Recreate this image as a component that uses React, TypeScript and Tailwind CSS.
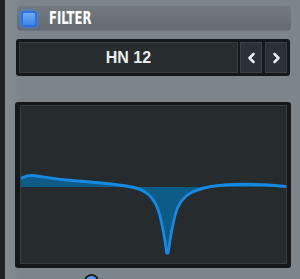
import React from 'react';

const curve =
  'M21,178.5 C25,176 29,175 33,175.5 C42,176.5 52,179 72,180.5 C100,182.5 118,184.5 132,187 C146,189.5 155,197 160,214 C164,229 166,244 167.3,253 L168.7,253 C170,244 172,229 176,214 C181,197 191,190 212,186.5 C232,183.5 262,184 287,186.5';

const fill = `${curve} L287,187 L21,187 Z`;

function Chevron({ dir }: { dir: 'left' | 'right' }) {
  return (
    <svg width="9" height="12" viewBox="0 0 9 12">
      <polyline
        points={dir === 'left' ? '6.5,2 2.5,6 6.5,10' : '2.5,2 6.5,6 2.5,10'}
        fill="none"
        stroke="#e6eaec"
        strokeWidth="2.6"
        strokeLinecap="round"
        strokeLinejoin="round"
      />
    </svg>
  );
}

export default function App() {
  return (
    <div className="w-[300px] h-[279px] overflow-hidden flex bg-[#7c858b] font-['Liberation_Sans',sans-serif]">
      <div className="w-[5px] shrink-0 bg-[#1e2225]" />
      <div className="flex-1 flex flex-col pl-[10px] pr-[9px] pt-[6px] bg-gradient-to-r from-[#858d93] to-[#7c858b] to-[6%]">
        {/* header */}
        <div className="shrink-0 ml-[2px] h-[25px] rounded-[4px] bg-gradient-to-b from-[#737a80] to-[#62696f] flex items-center pl-[4px] gap-[12px] shadow-[inset_0_-1px_0_rgba(255,255,255,0.08)]">
          <div className="w-[16px] h-[16px] rounded-[3px] border-2 border-[#2f6fe0] bg-gradient-to-b from-[#6eaef5] to-[#3c86e6] shadow-[0_0_3px_1px_rgba(60,140,255,0.7)]" />
          <span className="inline-block origin-left scale-x-[0.76] text-[17px] font-bold text-white font-['DejaVu_Sans_Condensed','DejaVu_Sans',sans-serif] leading-none">
            FILTER
          </span>
        </div>

        {/* preset selector */}
        <div className="shrink-0 ml-[1px] mr-[1px] mt-[8px] h-[37px] rounded-[3px] bg-[#15181a] p-[3px] flex gap-[2px]">
          <div className="flex-1 bg-[#272c2f] border border-[#363c40] flex items-center justify-center">
            <span className="text-[16px] font-bold text-[#e9edef] leading-none">HN 12</span>
          </div>
          <button className="w-[22px] bg-[#2b3134] border border-[#3a4145] flex items-center justify-center">
            <Chevron dir="left" />
          </button>
          <button className="ml-[1px] w-[22px] bg-[#2b3134] border border-[#3a4145] flex items-center justify-center">
            <Chevron dir="right" />
          </button>
        </div>

        {/* filter response graph */}
        <div className="shrink-0 mt-[26px] h-[166px] rounded-[3px] bg-[#15181a] pt-[3px] pl-[5px] pr-[4px] pb-[4px] flex">
          <div className="flex-1 bg-[#262b2e] border border-[#383e42] overflow-hidden">
            <svg width="100%" height="100%" viewBox="21 106 266 157" preserveAspectRatio="none">
              <path d={fill} fill="#0d5b87" />
              <path d={curve} fill="none" stroke="#1689e3" strokeWidth="2.8" strokeLinejoin="round" />
            </svg>
          </div>
        </div>

        {/* knob peeking in at the bottom */}
        <div className="shrink-0 mt-[6px] ml-[69px] w-[15px] h-[15px] rounded-full bg-[#1b1f22] p-[2px]">
          <div className="w-full h-full rounded-full bg-gradient-to-b from-[#5aa8ff] to-[#1467d8]" />
        </div>
      </div>
    </div>
  );
}
